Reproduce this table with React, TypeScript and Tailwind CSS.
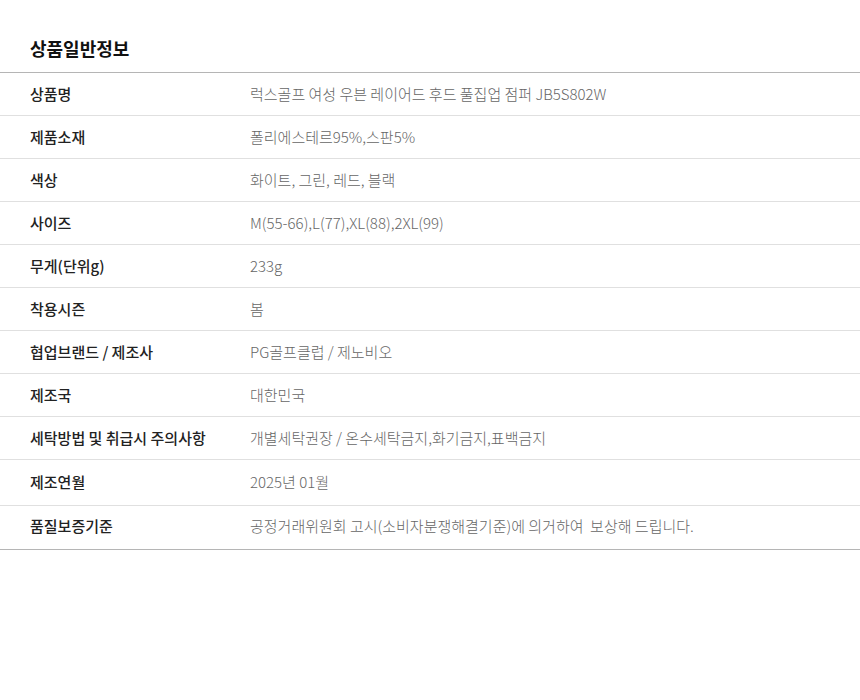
import React from 'react';

const rows: { label: string; value: string; h: string }[] = [
  { label: '상품명', value: '럭스골프 여성 우븐 레이어드 후드 풀집업 점퍼 JB5S802W', h: 'h-[43px]' },
  { label: '제품소재', value: '폴리에스테르95%,스판5%', h: 'h-[43px]' },
  { label: '색상', value: '화이트, 그린, 레드, 블랙', h: 'h-[43px]' },
  { label: '사이즈', value: 'M(55-66),L(77),XL(88),2XL(99)', h: 'h-[43px]' },
  { label: '무게(단위g)', value: '233g', h: 'h-[43px]' },
  { label: '착용시즌', value: '봄', h: 'h-[43px]' },
  { label: '협업브랜드 / 제조사', value: 'PG골프클럽 / 제노비오', h: 'h-[43px]' },
  { label: '제조국', value: '대한민국', h: 'h-[43px]' },
  { label: '세탁방법 및 취급시 주의사항', value: '개별세탁권장 / 온수세탁금지,화기금지,표백금지', h: 'h-[43px]' },
  { label: '제조연월', value: '2025년 01월', h: 'h-[46px]' },
  { label: '품질보증기준', value: '공정거래위원회 고시(소비자분쟁해결기준)에 의거하여  보상해 드립니다.', h: 'h-[43px] pb-[2px]' },
];

const App: React.FC = () => {
  return (
    <div
      className="min-h-screen w-[860px] bg-white"
      style={{ fontFamily: '"Noto Sans CJK KR", "Noto Sans", sans-serif' }}
    >
      <div className="px-[30px] pt-[36px] pb-[12px]">
        <h2 className="text-[18px] leading-[24px] font-bold text-[#111]">상품일반정보</h2>
      </div>

      <div className="border-t border-b border-[#b5b5b5]">
        {rows.map((row, i) => (
          <div
            key={row.label}
            className={`flex items-center ${row.h} ${
              i < rows.length - 1 ? 'border-b border-[#e0e0e0]' : ''
            }`}
          >
            <div className="w-[250px] shrink-0 pl-[30px] text-[15px] font-medium text-[#222]">{row.label}</div>
            <div className="flex-1 text-[15px] font-light text-[#666] whitespace-pre">{row.value}</div>
          </div>
        ))}
      </div>
    </div>
  );
};

export default App;
